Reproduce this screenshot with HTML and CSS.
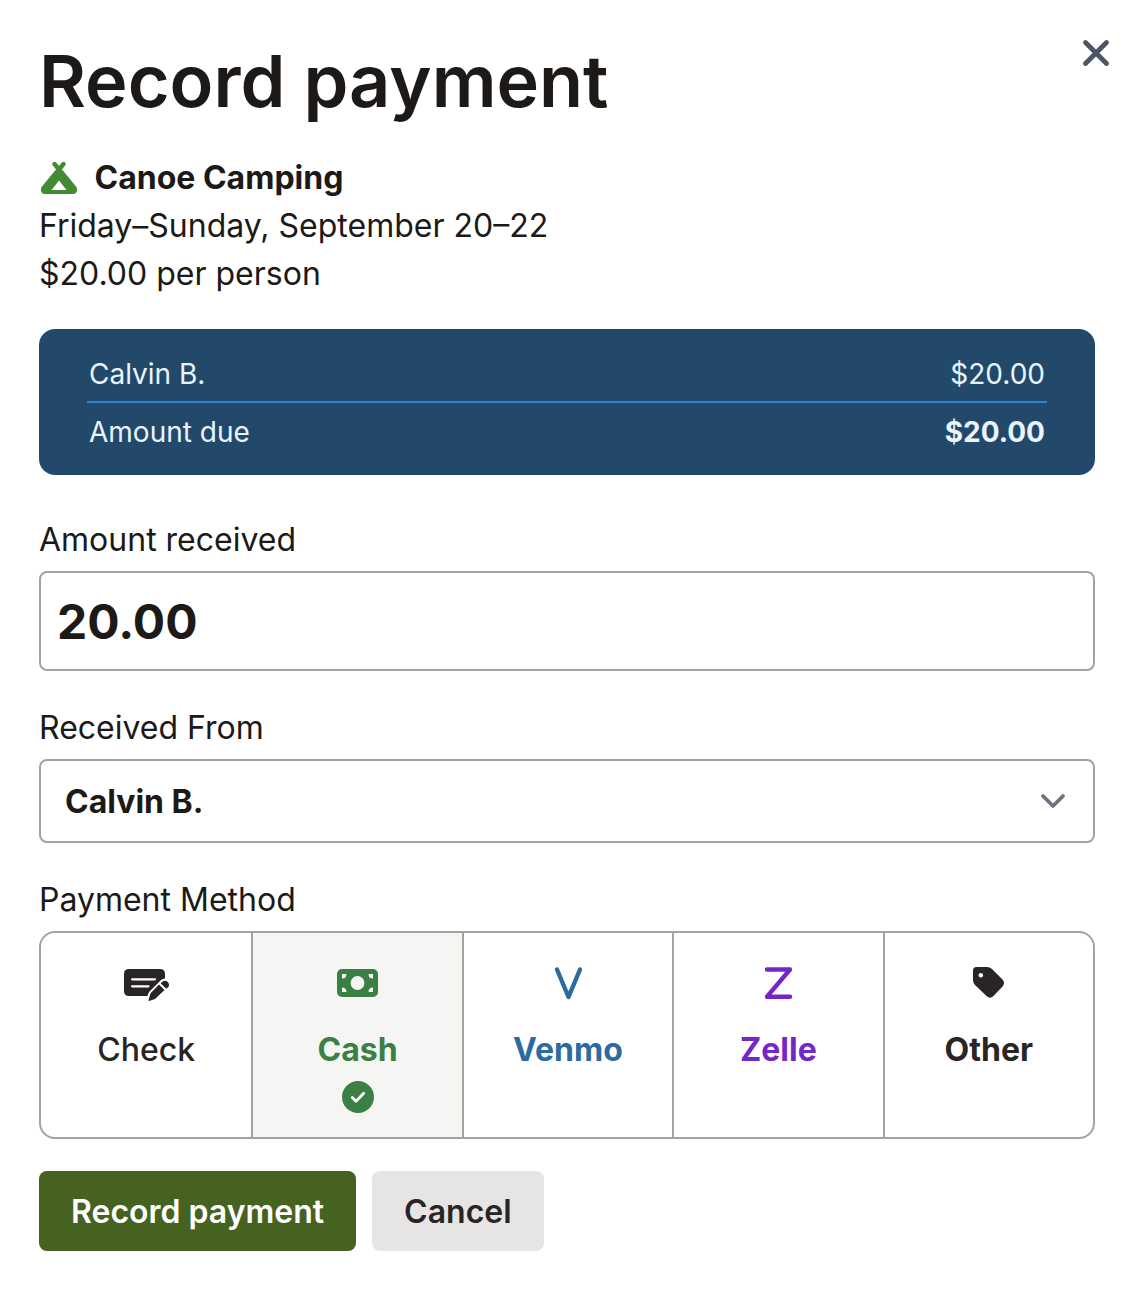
FILE: index.html
```html
<!DOCTYPE html>
<html lang="en">
<head>
<meta charset="utf-8">
<title>Record payment</title>
<link rel="stylesheet" href="styles.css">
</head>
<body>
<main class="dialog">
  <button class="close" aria-label="Close"><svg viewBox="0 0 28 28" width="28" height="28"><path d="M3.5 3.5 24.5 24.5M24.5 3.5 3.5 24.5"/></svg></button>
  <h1 class="title">Record payment</h1>
  <section class="event">
    <div class="event-name">
      <svg class="tent" viewBox="0 0 40 36" width="40" height="36"><path d="M15.5 4 20 9.500 24.500 4" fill="none" stroke="currentColor" stroke-width="4.400" stroke-linecap="round" stroke-linejoin="round"/><path fill="currentColor" fill-rule="evenodd" d="M20 7 23.500 10 37 26.500C39.500 30 37.500 34 34.500 34H5.500C2.500 34 .5 30 3 26.500L16.500 10ZM20 20.500 12.500 30H27.500Z"/></svg>
      <strong>Canoe Camping</strong>
    </div>
    <div>Friday–Sunday, September 20–22</div>
    <div>$20.00 per person</div>
  </section>
  <section class="summary">
    <div class="line"><span>Calvin B.</span><span>$20.00</span></div>
    <div class="line due"><span>Amount due</span><strong>$20.00</strong></div>
  </section>
  <div class="label first">Amount received</div>
  <div class="input amount">20.00</div>
  <div class="label">Received From</div>
  <div class="input select"><span>Calvin B.</span><svg class="chevron" viewBox="0 0 28 20" width="28" height="20"><path d="M4 4 14 14 24 4"/></svg></div>
  <div class="label">Payment Method</div>
  <div class="methods">
    <div class="method check">
      <svg class="icon" viewBox="0 0 48 36" width="48" height="36"><path fill="currentColor" d="M7 4H38Q43 4 43 9V13.500Q40.500 13.500 38.500 15.500L27.500 26.500Q26 28 25.500 31H7Q2 31 2 26V9Q2 4 7 4Z"/><path d="M10 14.300H33M10 21.300H26.500" fill="none" stroke="#fff" stroke-width="2.200" stroke-linecap="round"/><path fill="currentColor" d="M37 19.500 42.500 25 33 34 27 36Q26.300 35.800 26.500 35L28.500 28.300ZM38.600 18.200 40.800 16.500Q43.500 14.800 45.700 17.100 48.100 19.800 46.300 22L44.200 23.700Z"/></svg>
      <span>Check</span>
    </div>
    <div class="method cash selected">
      <svg class="icon" viewBox="0 0 48 36" width="48" height="36"><rect x="3" y="4" width="41" height="28" rx="5" fill="currentColor"/><circle cx="23.500" cy="18" r="6.900" fill="#f5f5f4"/><path fill="#f5f5f4" d="M8 9H12.500Q12.500 13.500 8 13.500ZM39 9H34.500Q34.500 13.500 39 13.500ZM8 27H12.500Q12.500 22.500 8 22.500ZM39 27H34.500Q34.500 22.500 39 22.500Z"/></svg>
      <span>Cash</span>
      <svg class="tick" viewBox="0 0 32 32" width="32" height="32"><circle cx="16" cy="16" r="16" fill="currentColor"/><path d="M10.300 16.500 14 20.200 21.700 12.300"/></svg>
    </div>
    <div class="method venmo">
      <svg class="icon line-icon" viewBox="0 0 48 36" width="48" height="36"><path d="M13 4.500 24.500 32 36 4.500"/></svg>
      <span>Venmo</span>
    </div>
    <div class="method zelle">
      <svg class="icon line-icon" viewBox="0 0 48 36" width="48" height="36"><path d="M13 4.500H36L13 31.700H36"/></svg>
      <span>Zelle</span>
    </div>
    <div class="method other">
      <svg class="icon" viewBox="0 0 48 36" width="48" height="36"><path fill="currentColor" fill-rule="evenodd" d="M11.500 2H22Q25 2 27 4L37.500 14.500Q40.500 18 37.500 21.500L28.500 31Q25 34.300 21.500 31L10 20Q8 18 8 15V5.500Q8 2 11.500 2ZM15.800 8A2.300 2.300 0 1 0 15.800 12.600 2.300 2.300 0 1 0 15.800 8Z"/></svg>
      <span>Other</span>
    </div>
  </div>
  <div class="actions"><button class="btn primary">Record payment</button><button class="btn">Cancel</button></div>
</main>
</body>
</html>
```

FILE: styles.css
```css
*{box-sizing:border-box}
body{margin:0;background:#fff;color:#1c1917;font:32px/48px Inter,sans-serif}
.dialog{position:relative;width:1136px;height:1294px;padding:45px 41px 0 39px}
.close{position:absolute;left:1082px;top:39px;width:28px;height:28px;padding:0;border:0;background:none}
.close svg{display:block;fill:none;stroke:#4b5563;stroke-width:4.8;stroke-linecap:round}
.title{margin:0;font-size:72px;line-height:72px;font-weight:600;height:109px}
.event-name{display:flex;align-items:center;gap:15.5px}
.tent{color:#438a34}
.summary{margin-top:31px;height:146px;padding:16px 48px;border-radius:16px;background:#22496a;color:#e8f4ff;font-size:28px}
.line{display:flex;justify-content:space-between;height:58px;padding:5px 2px 0;line-height:48px;border-bottom:2px solid #3182ce}
.due{border:0}
.label{margin-top:32px;height:56px;line-height:49px}
.label.first{margin-top:40px;line-height:50px}
.input{display:flex;align-items:center;border:2px solid #a8a29e;border-radius:8px;font-weight:700}
.amount{height:100px;padding:2px 16px 0;font-size:48px}
.select{height:84px;padding:2px 26px 0 24px;justify-content:space-between}
.chevron{fill:none;stroke:#6b7280;stroke-width:3.8;stroke-linecap:round;stroke-linejoin:round}
.methods{display:grid;grid-template-columns:repeat(5,1fr);height:208px;border:2px solid #a8a29e;border-radius:16px;overflow:hidden}
.method{display:flex;flex-direction:column;align-items:center;padding-top:32px;font-weight:700}
.method + .method{border-left:2px solid #a8a29e}
.icon{display:block;margin-bottom:25px}
.line-icon{fill:none;stroke:currentColor;stroke-width:4.4;stroke-linecap:round;stroke-linejoin:round}
.check{font-weight:500;color:#292524}
.selected{background:#f5f5f4}
.cash{color:#3a7f43}
.venmo{color:#2d6a9f}
.zelle{color:#7526c9}
.other{color:#292524}
.tick{display:block;margin-top:7px}
.tick path{fill:none;stroke:#fff;stroke-width:2.8;stroke-linecap:round;stroke-linejoin:round}
.actions{display:flex;gap:16px;margin-top:32px}
.btn{height:80px;padding:0 32px;border:0;border-radius:8px;font:600 32px Inter,sans-serif;background:#e7e5e4;color:#292524}
.primary{background:#466221;color:#fff}
```
